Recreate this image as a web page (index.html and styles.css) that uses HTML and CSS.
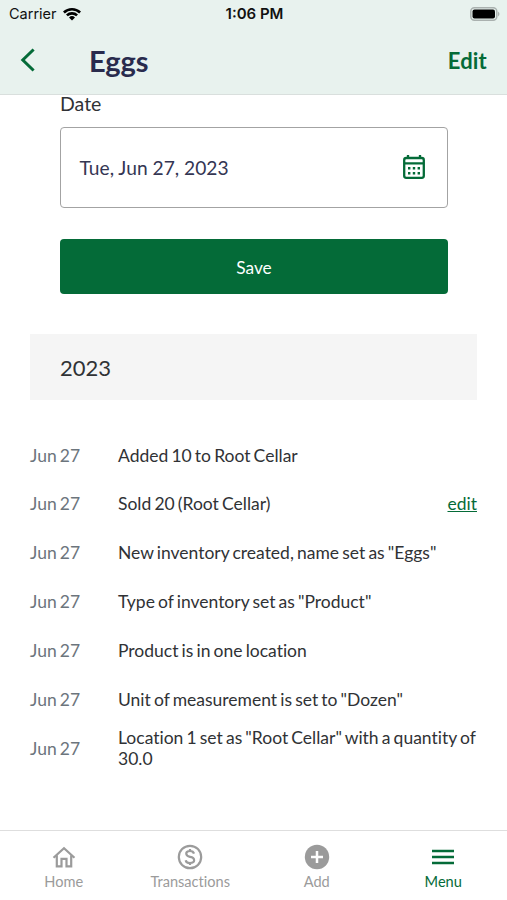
FILE: index.html
```html
<!DOCTYPE html>
<html lang="en">
<head>
<meta charset="utf-8">
<title>Eggs</title>
<link rel="stylesheet" href="styles.css">
</head>
<body>
<header class="top">
  <div class="status">
    <div class="carrier"><span>Carrier</span>
      <svg class="wifi" viewBox="0 0 18 14"><path d="M0 4.500a13 13 0 0 1 18 0L16.200 6.400a10.300 10.300 0 0 0-14.400 0zM3 7.500a8.700 8.700 0 0 1 12 0L13.200 9.300a6.200 6.200 0 0 0-8.400 0zM6 10.500a4.400 4.400 0 0 1 6 0L9 13.500z"/></svg>
    </div>
    <span class="time">1:06 PM</span>
    <svg class="battery" viewBox="0 0 30 14"><rect x=".8" y=".8" width="26" height="12.400" rx="3.600" fill="none" stroke="#aab1af" stroke-width="1.500"/><rect x="2.500" y="2.500" width="22.500" height="9" rx="2"/><path d="M28 4.500q3 2.500 0 5z" fill="#aab1af"/></svg>
  </div>
  <div class="nav">
    <svg class="back" viewBox="0 0 16 26"><path d="M13.600 2.500 2.800 13l10.800 10.500"/></svg>
    <h1>Eggs</h1>
    <span class="edit">Edit</span>
  </div>
</header>
<main>
  <section class="form">
    <label>Date</label>
    <div class="field"><span>Tue, Jun 27, 2023</span>
      <svg class="calendar" viewBox="0 0 24 26"><rect x="2.200" y="4" width="19.600" height="19.800" rx="2"/><path d="M2 9.300h20M6 1v4M18 1v4"/><path class="dots" d="M6 14.300h2.400m2.400 0h2.400m2.400 0H18M6 19.300h2.400m2.400 0h2.400m2.400 0H18"/></svg>
    </div>
    <div class="save">Save</div>
  </section>
  <h2>2023</h2>
  <ul class="log">
    <li><time>Jun 27</time><p>Added 10 to Root Cellar</p></li>
    <li><time>Jun 27</time><p>Sold 20 (Root Cellar)</p><span class="link">edit</span></li>
    <li><time>Jun 27</time><p>New inventory created, name set as "Eggs"</p></li>
    <li><time>Jun 27</time><p>Type of inventory set as "Product"</p></li>
    <li><time>Jun 27</time><p>Product is in one location</p></li>
    <li><time>Jun 27</time><p>Unit of measurement is set to "Dozen"</p></li>
    <li><time>Jun 27</time><p>Location 1 set as "Root Cellar" with a quantity of 30.0</p></li>
  </ul>
</main>
<footer class="tabs">
  <div class="tab"><svg viewBox="0 0 26 26"><path class="line" d="M2.500 13.700 13 4.300l10.500 9.400M5.800 11.500v10.800h4.700v-7.500h5v7.500h4.700V11.500"/></svg><span>Home</span></div>
  <div class="tab"><svg viewBox="0 0 26 26"><circle class="line" cx="13" cy="13" r="11.200"/><path class="line" d="M17 9.600C16.500 7.700 15 7 13 7c-5 0-5 5 0 5.900 5.500.9 5.500 6.100 0 6.100-2.500 0-4-1-4.300-2.800M13 5V7m0 12v2"/></svg><span>Transactions</span></div>
  <div class="tab"><svg viewBox="0 0 26 26"><circle class="disc" cx="13" cy="13" r="12.200"/><path class="plus" d="M13 7v12M7 13h12"/></svg><span>Add</span></div>
  <div class="tab active"><svg viewBox="0 0 26 26"><path class="bars" d="M2 7h22M2 13h22M2 19h22"/></svg><span>Menu</span></div>
</footer>
</body>
</html>
```
FILE: styles.css
```css
* { box-sizing: border-box; }
body { margin: 0; width: 507px; height: 900px; overflow: hidden; display: flex; flex-direction: column; background: #fff; color: #303235; font-family: Lato, sans-serif; font-variant-ligatures: none; }
h1, h2, p, ul { margin: 0; padding: 0; }
svg { display: block; flex: none; }
.top { height: 95px; flex: none; background: #e8f2ee; border-bottom: 1px solid #d9dfdd; }
.status { height: 27px; display: grid; grid-template-columns: 1fr auto 1fr; align-items: center; padding: 0 7px 0 9px; color: #111; font: 14.500px/28px Inter, sans-serif; }
.carrier { display: flex; align-items: center; gap: 6px; }
.wifi { width: 18px; height: 14px; }
.time { font-size: 15px; font-weight: 600; }
.battery { width: 30px; height: 14px; justify-self: end; }
.nav { height: 66px; display: flex; align-items: center; padding: 0 20px 0 20px; }
.back { width: 16px; height: 26px; fill: none; stroke: #046b38; stroke-width: 3; }
h1 { margin-left: 53px; font-size: 29px; color: #292b4d; line-height: 38px; padding-top: 2px; }
.edit { margin-left: auto; font-size: 22px; font-weight: 700; letter-spacing: .2px; color: #046b38; }
main { flex: 1; padding: 0 30px; }
.form { padding: 0 29px 0 30px; }
label { display: block; height: 32px; font-size: 19.500px; line-height: 18px; }
.field { height: 80.500px; border: 1px solid #a3a3a3; border-radius: 4px; display: flex; align-items: center; justify-content: space-between; padding: 0 21px 0 18.500px; font-size: 19.200px; color: #343653; }
.calendar { width: 24px; height: 26px; fill: none; stroke: #046b38; stroke-width: 2.300; }
.calendar .dots { stroke-width: 2.400; }
.save { height: 55px; margin-top: 31px; border-radius: 4px; background: #046b38; color: #fff; font-size: 17.300px; line-height: 57px; text-align: center; }
h2 { height: 66px; margin-top: 40.500px; padding-left: 30px; background: #f5f5f5; font-size: 22px; font-weight: 400; line-height: 67px; }
.log { list-style: none; margin-top: 30.600px; font-size: 17.500px; line-height: 21px; word-spacing: -1.350px; }
.log li { height: 48.900px; display: flex; align-items: center; }
time { width: 88px; flex: none; color: #6c757d; }
.log p { flex: 1; }
.link { color: #046b38; text-decoration: underline; }
.tabs { height: 70px; flex: none; border-top: 1px solid #dedede; display: grid; grid-template-columns: repeat(4, 126.500px); padding-left: .5px; color: #9b9b9b; font-size: 14.600px; }
.tab { display: flex; flex-direction: column; align-items: center; padding-top: 13px; }
.tab svg { width: 26px; height: 26px; }
.tab span { line-height: 20px; margin-top: 2px; }
.active { color: #046b38; }
.line, .bars { fill: none; stroke: currentColor; stroke-width: 2.200; }
.bars { stroke-width: 2.500; }
.disc { fill: currentColor; }
.plus { stroke: #fff; stroke-width: 2.500; }
```
